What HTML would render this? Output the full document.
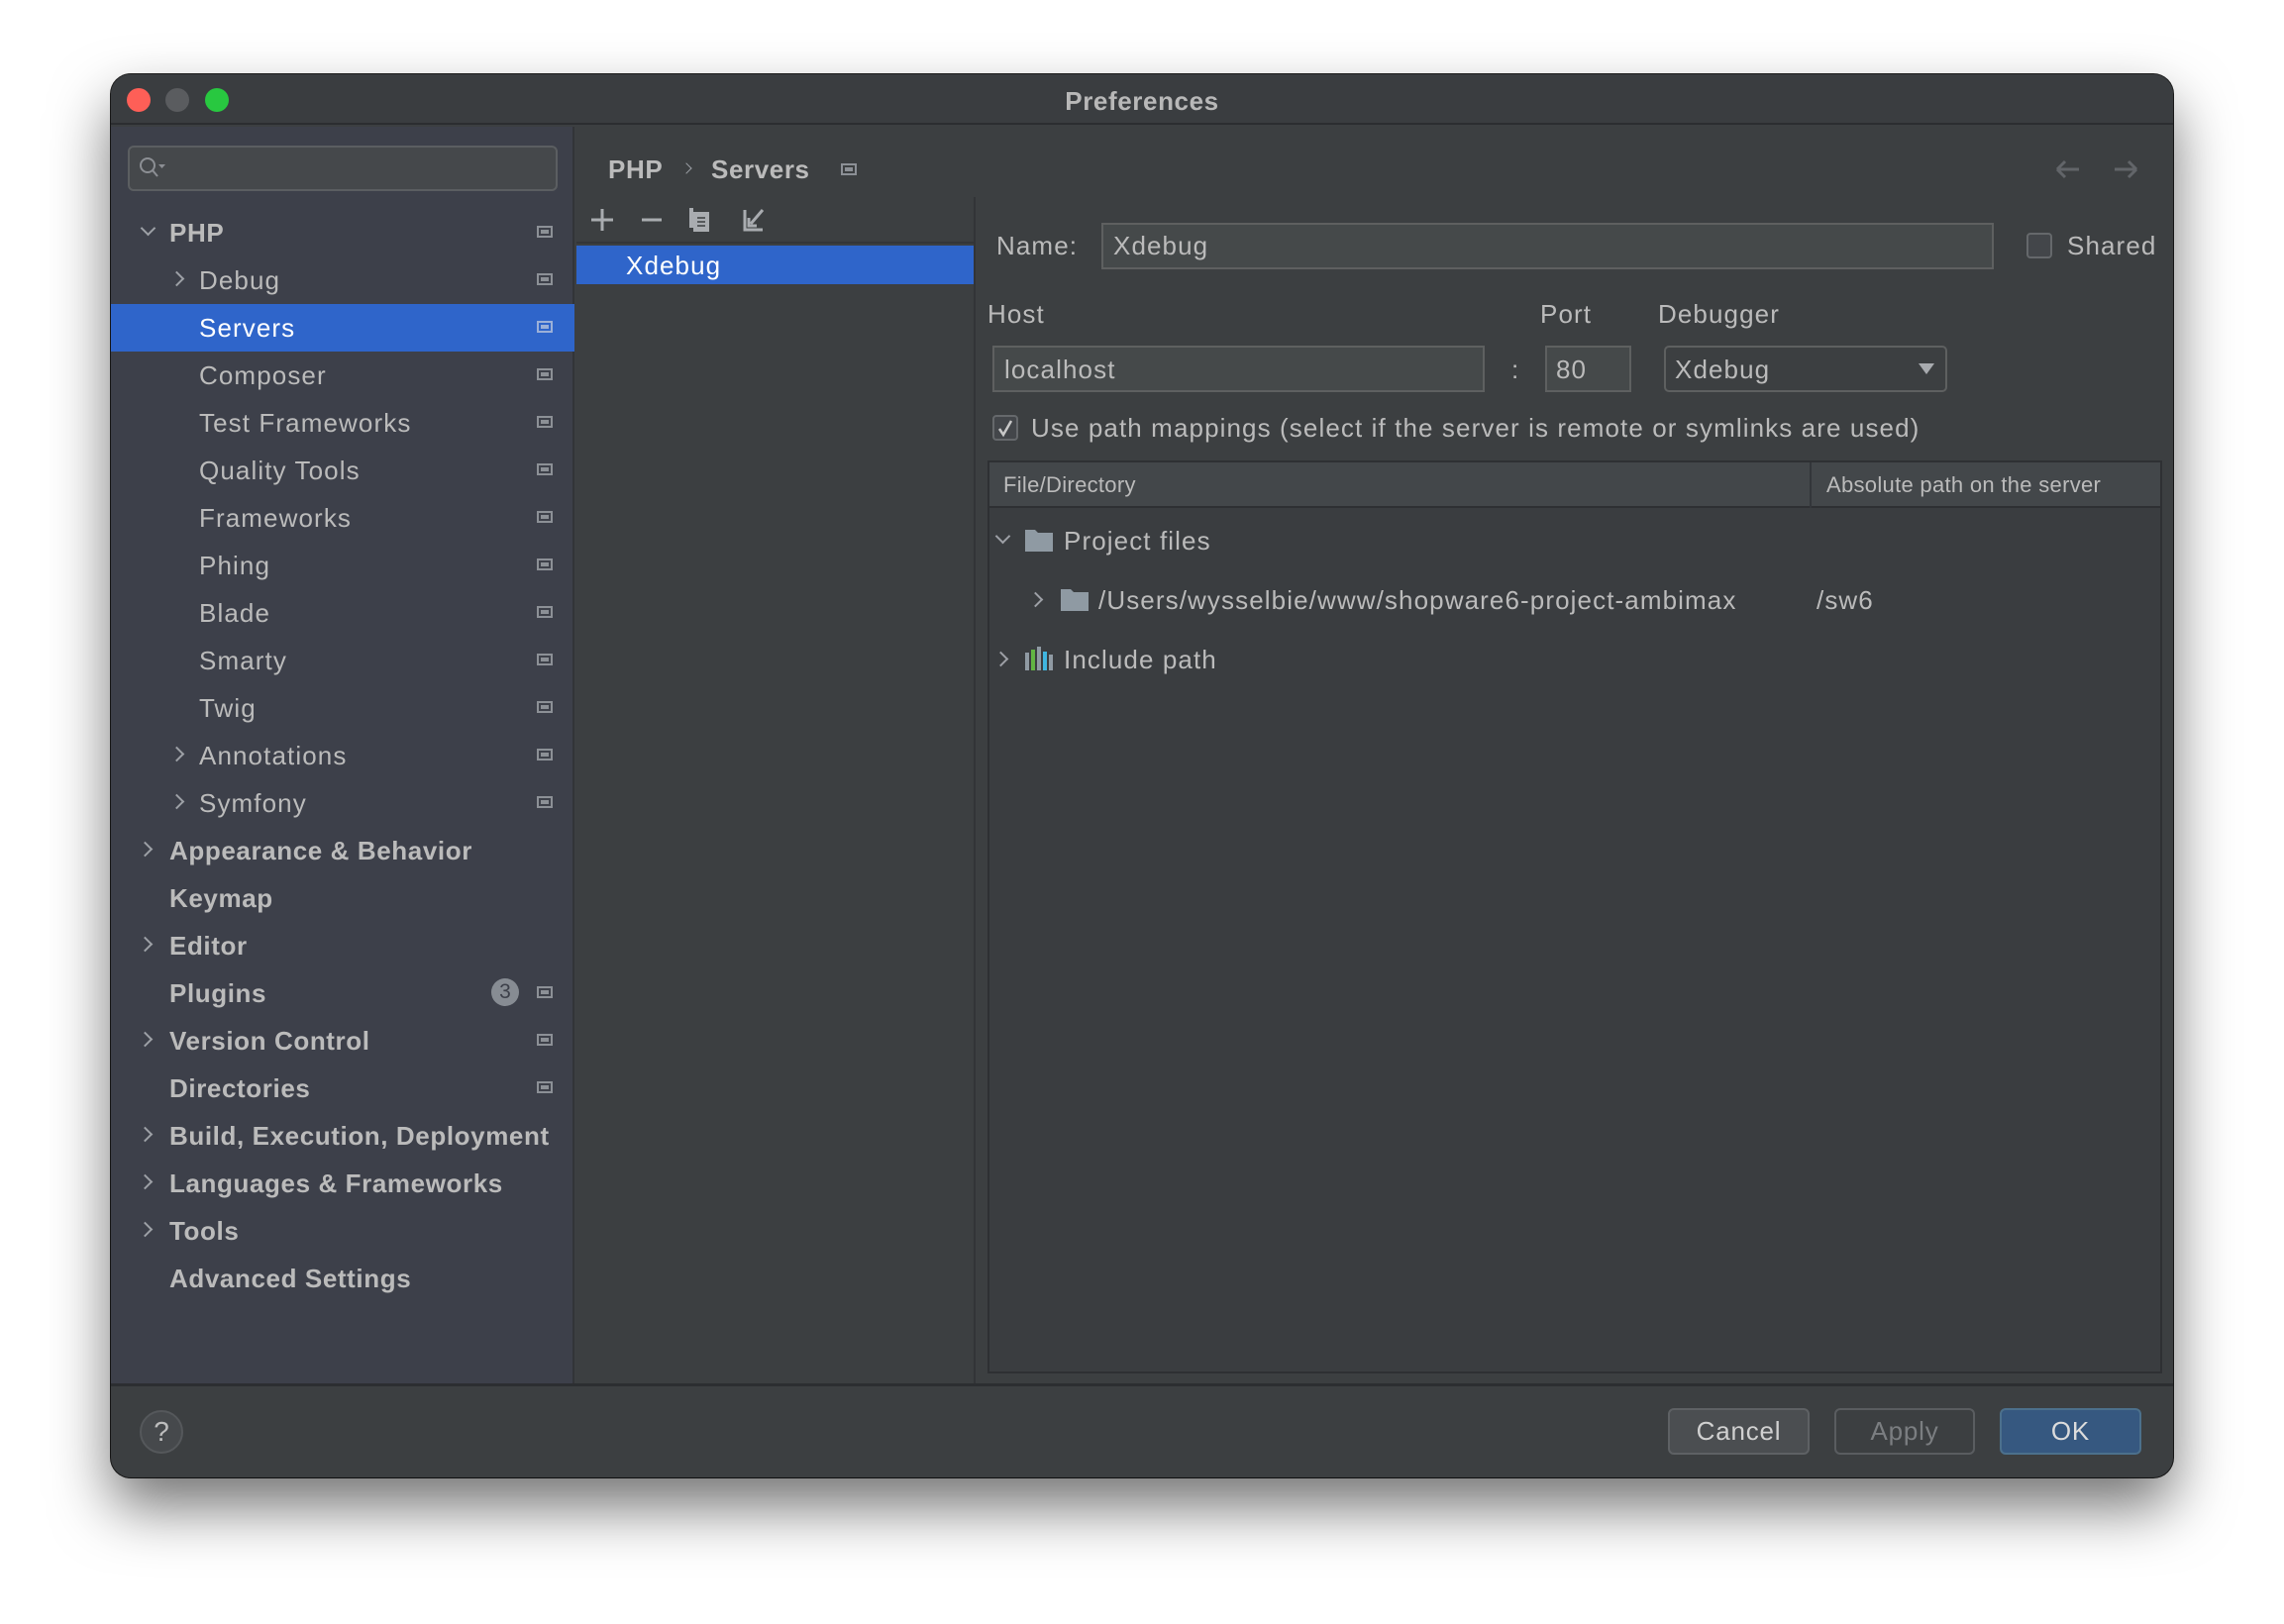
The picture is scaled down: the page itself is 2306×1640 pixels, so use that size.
<!DOCTYPE html>
<html><head><meta charset="utf-8"><style>
*{margin:0;padding:0;box-sizing:border-box}
body{width:2306px;height:1640px;background:#fff;font-family:"Liberation Sans",sans-serif;position:relative;overflow:hidden;color:#bbbbbb}
.a{position:absolute}
.win{left:112px;top:75px;width:2082px;height:1417px;border-radius:20px;background:#3c3f41;box-shadow:0 30px 60px rgba(0,0,0,.55),0 0 0 1px #1e1e1e;overflow:hidden}
.t{font-size:26px;white-space:nowrap;line-height:1;letter-spacing:1.1px}
.b{font-weight:bold;letter-spacing:0.6px}
.ic{width:16px;height:12px;border:2px solid #8c9096;background:#8c9096;box-shadow:inset 0 0 0 2px #3e414a}
.chev{width:11px;height:11px;border-right:2px solid #9da0a6;border-bottom:2px solid #9da0a6}
.fld{background:#45494a;border:2px solid #5e6060}
.btn{border-radius:6px;font-size:26px;letter-spacing:0.8px;display:flex;align-items:center;justify-content:center}
</style></head><body>
<div class="a win">
 <div class="a" style="left:0;top:0;width:2082px;height:51px;background:#3a3d40;border-bottom:2px solid #2b2d30"></div>
 <div class="a" style="left:16px;top:14px;width:24px;height:24px;border-radius:50%;background:#fe5f57"></div>
 <div class="a" style="left:55px;top:14px;width:24px;height:24px;border-radius:50%;background:#5a5c5f"></div>
 <div class="a" style="left:95px;top:14px;width:24px;height:24px;border-radius:50%;background:#28c840"></div>
 <div class="a t b" style="left:0;width:2082px;text-align:center;top:14px;color:#b8b8b8">Preferences</div>
 <div class="a" style="left:0;top:53px;width:468px;height:1271px;background:#3d404a;border-right:2px solid #323438"></div>
 <div class="a fld" style="left:17px;top:72px;width:434px;height:46px;border-radius:6px;background:#45484b;border-color:#5b5e61"></div>
 <svg class="a" style="left:27px;top:82px" width="34" height="26"><circle cx="10" cy="10" r="7" fill="none" stroke="#8c8f94" stroke-width="2"/><line x1="15" y1="15" x2="20" y2="21" stroke="#8c8f94" stroke-width="2"/><path d="M21 9h7l-3.5 4z" fill="#8c8f94"/></svg>
 <div class="a" style="left:0;top:232px;width:468px;height:48px;background:#2f65ca"></div>
</div>
<div class="a chev" style="left:144px;top:225px;transform:rotate(45deg)"></div>
<div class="a t b" style="left:171px;top:222px">PHP</div>
<div class="a chev" style="left:173px;top:276px;transform:rotate(-45deg)"></div>
<div class="a t" style="left:201px;top:270px">Debug</div>
<div class="a t" style="left:201px;top:318px;color:#fff">Servers</div>
<div class="a t" style="left:201px;top:366px">Composer</div>
<div class="a t" style="left:201px;top:414px">Test Frameworks</div>
<div class="a t" style="left:201px;top:462px">Quality Tools</div>
<div class="a t" style="left:201px;top:510px">Frameworks</div>
<div class="a t" style="left:201px;top:558px">Phing</div>
<div class="a t" style="left:201px;top:606px">Blade</div>
<div class="a t" style="left:201px;top:654px">Smarty</div>
<div class="a t" style="left:201px;top:702px">Twig</div>
<div class="a chev" style="left:173px;top:756px;transform:rotate(-45deg)"></div>
<div class="a t" style="left:201px;top:750px">Annotations</div>
<div class="a chev" style="left:173px;top:804px;transform:rotate(-45deg)"></div>
<div class="a t" style="left:201px;top:798px">Symfony</div>
<div class="a chev" style="left:141px;top:852px;transform:rotate(-45deg)"></div>
<div class="a t b" style="left:171px;top:846px">Appearance &amp; Behavior</div>
<div class="a t b" style="left:171px;top:894px">Keymap</div>
<div class="a chev" style="left:141px;top:948px;transform:rotate(-45deg)"></div>
<div class="a t b" style="left:171px;top:942px">Editor</div>
<div class="a t b" style="left:171px;top:990px">Plugins</div>
<div class="a" style="left:496px;top:988px;width:28px;height:28px;border-radius:50%;background:#878c93;color:#3d404a;font-size:21px;text-align:center;line-height:28px">3</div>
<div class="a chev" style="left:141px;top:1044px;transform:rotate(-45deg)"></div>
<div class="a t b" style="left:171px;top:1038px">Version Control</div>
<div class="a t b" style="left:171px;top:1086px">Directories</div>
<div class="a chev" style="left:141px;top:1140px;transform:rotate(-45deg)"></div>
<div class="a t b" style="left:171px;top:1134px">Build, Execution, Deployment</div>
<div class="a chev" style="left:141px;top:1188px;transform:rotate(-45deg)"></div>
<div class="a t b" style="left:171px;top:1182px">Languages &amp; Frameworks</div>
<div class="a chev" style="left:141px;top:1236px;transform:rotate(-45deg)"></div>
<div class="a t b" style="left:171px;top:1230px">Tools</div>
<div class="a t b" style="left:171px;top:1278px">Advanced Settings</div>
<div class="a ic" style="left:542px;top:228px"></div>
<div class="a ic" style="left:542px;top:276px"></div>
<div class="a ic" style="left:542px;top:324px;border-color:#9bb0d8;background:#9bb0d8;box-shadow:inset 0 0 0 2px #2f65ca"></div>
<div class="a ic" style="left:542px;top:372px"></div>
<div class="a ic" style="left:542px;top:420px"></div>
<div class="a ic" style="left:542px;top:468px"></div>
<div class="a ic" style="left:542px;top:516px"></div>
<div class="a ic" style="left:542px;top:564px"></div>
<div class="a ic" style="left:542px;top:612px"></div>
<div class="a ic" style="left:542px;top:660px"></div>
<div class="a ic" style="left:542px;top:708px"></div>
<div class="a ic" style="left:542px;top:756px"></div>
<div class="a ic" style="left:542px;top:804px"></div>
<div class="a ic" style="left:542px;top:996px"></div>
<div class="a ic" style="left:542px;top:1044px"></div>
<div class="a ic" style="left:542px;top:1092px"></div>
<div class="a t b" style="left:614px;top:158px">PHP</div>
<div class="a chev" style="left:689px;top:166px;width:8px;height:8px;border-width:1.5px;transform:rotate(-45deg)"></div>
<div class="a t b" style="left:718px;top:158px">Servers</div>
<div class="a ic" style="left:849px;top:165px;box-shadow:inset 0 0 0 2px #3c3f41"></div>
<svg class="a" style="left:2073px;top:158px" width="90" height="26"><path d="M4 13h22M4 13l8-8M4 13l8 8" stroke="#626569" stroke-width="3" fill="none"/><path d="M62 13h22M84 13l-8-8M84 13l-8 8" stroke="#626569" stroke-width="3" fill="none"/></svg>
<svg class="a" style="left:596px;top:208px" width="190" height="28"><path d="M12 3v22M1 14h22" stroke="#a9acb0" stroke-width="3"/><path d="M52 14h20" stroke="#a9acb0" stroke-width="3"/><rect x="104" y="6" width="16" height="20" fill="#a9acb0"/><rect x="100" y="2" width="4" height="20" fill="#a9acb0"/><path d="M108 12h8M108 16h8M108 20h8" stroke="#3c3f41" stroke-width="1.5"/><path d="M156 4v20h18M162 18l12-14" stroke="#a9acb0" stroke-width="3" fill="none"/><path d="M160 12v8h8" stroke="#a9acb0" stroke-width="3" fill="none"/></svg>
<div class="a" style="left:582px;top:244px;width:402px;height:2px;background:#333538"></div>
<div class="a" style="left:582px;top:248px;width:401px;height:39px;background:#2f65ca"></div>
<div class="a t" style="left:632px;top:255px;color:#fff">Xdebug</div>
<div class="a" style="left:983px;top:199px;width:2px;height:1198px;background:#323437"></div>
<div class="a t" style="left:1006px;top:235px">Name:</div>
<div class="a fld" style="left:1112px;top:225px;width:901px;height:47px"></div>
<div class="a t" style="left:1124px;top:235px">Xdebug</div>
<div class="a" style="left:2046px;top:235px;width:26px;height:26px;border:2px solid #65686b;border-radius:4px;background:#43464a"></div>
<div class="a t" style="left:2087px;top:235px">Shared</div>
<div class="a t" style="left:997px;top:304px">Host</div>
<div class="a t" style="left:1555px;top:304px">Port</div>
<div class="a t" style="left:1674px;top:304px">Debugger</div>
<div class="a fld" style="left:1002px;top:349px;width:497px;height:47px"></div>
<div class="a t" style="left:1014px;top:360px">localhost</div>
<div class="a t" style="left:1526px;top:360px">:</div>
<div class="a fld" style="left:1560px;top:349px;width:87px;height:47px"></div>
<div class="a t" style="left:1571px;top:360px">80</div>
<div class="a fld" style="left:1680px;top:349px;width:286px;height:47px;border-radius:5px;background:#3c3f41"></div>
<div class="a t" style="left:1691px;top:360px">Xdebug</div>
<svg class="a" style="left:1937px;top:367px" width="16" height="12"><path d="M0 0h16L8 11z" fill="#a8abaf"/></svg>
<div class="a" style="left:1002px;top:419px;width:26px;height:26px;border:2px solid #65686b;border-radius:4px;background:#43464a"></div>
<svg class="a" style="left:1004px;top:421px" width="22" height="22"><path d="M5 12l4 6 8-14" stroke="#c8c8c8" stroke-width="2.5" fill="none"/></svg>
<div class="a t" style="left:1041px;top:419px">Use path mappings (select if the server is remote or symlinks are used)</div>
<div class="a" style="left:997px;top:465px;width:1186px;height:922px;border:2px solid #2e3033;background:#3a3d40"></div>
<div class="a" style="left:999px;top:467px;width:1182px;height:46px;background:#43474a;border-bottom:2px solid #2e3033"></div>
<div class="a" style="left:1827px;top:467px;width:2px;height:46px;background:#33363a"></div>
<div class="a t" style="left:1013px;top:479px;font-size:22px;letter-spacing:0.3px">File/Directory</div>
<div class="a t" style="left:1844px;top:479px;font-size:22px;letter-spacing:0.3px">Absolute path on the server</div>
<div class="a chev" style="left:1007px;top:536px;transform:rotate(45deg)"></div>
<svg class="a" style="left:1035px;top:533px" width="30" height="24"><path d="M0 2h10l3 3h15v19H0z" fill="#8f9aa3"/></svg>
<div class="a t" style="left:1074px;top:533px">Project files</div>
<div class="a chev" style="left:1040px;top:600px;transform:rotate(-45deg)"></div>
<svg class="a" style="left:1071px;top:593px" width="30" height="24"><path d="M0 2h10l3 3h15v19H0z" fill="#8f9aa3"/></svg>
<div class="a t" style="left:1109px;top:593px">/Users/wysselbie/www/shopware6-project-ambimax</div>
<div class="a t" style="left:1834px;top:593px">/sw6</div>
<div class="a chev" style="left:1005px;top:660px;transform:rotate(-45deg)"></div>
<svg class="a" style="left:1035px;top:651px" width="30" height="26"><rect x="0" y="8" width="4" height="18" fill="#8f9aa3"/><rect x="6" y="5" width="4" height="21" fill="#62b543"/><rect x="12" y="2" width="4" height="24" fill="#8f9aa3"/><rect x="18" y="7" width="4" height="19" fill="#40b6e0"/><rect x="24" y="10" width="4" height="16" fill="#8f9aa3"/></svg>
<div class="a t" style="left:1074px;top:653px">Include path</div>
<div class="a" style="left:112px;top:1397px;width:2082px;height:3px;background:#2c2e31"></div>
<div class="a" style="left:141px;top:1424px;width:44px;height:44px;border-radius:50%;background:#46494c;border:2px solid #55585b;color:#bdbdbd;font-size:28px;text-align:center;line-height:40px">?</div>
<div class="a btn" style="left:1684px;top:1422px;width:143px;height:47px;background:#4b4e51;border:2px solid #5e6164;color:#d0d0d0">Cancel</div>
<div class="a btn" style="left:1852px;top:1422px;width:142px;height:47px;background:#3c3f41;border:2px solid #5a5d60;color:#7b7e81">Apply</div>
<div class="a btn" style="left:2019px;top:1422px;width:143px;height:47px;background:#365880;border:2px solid #4c708c;color:#dcdcdc">OK</div>
</body></html>
